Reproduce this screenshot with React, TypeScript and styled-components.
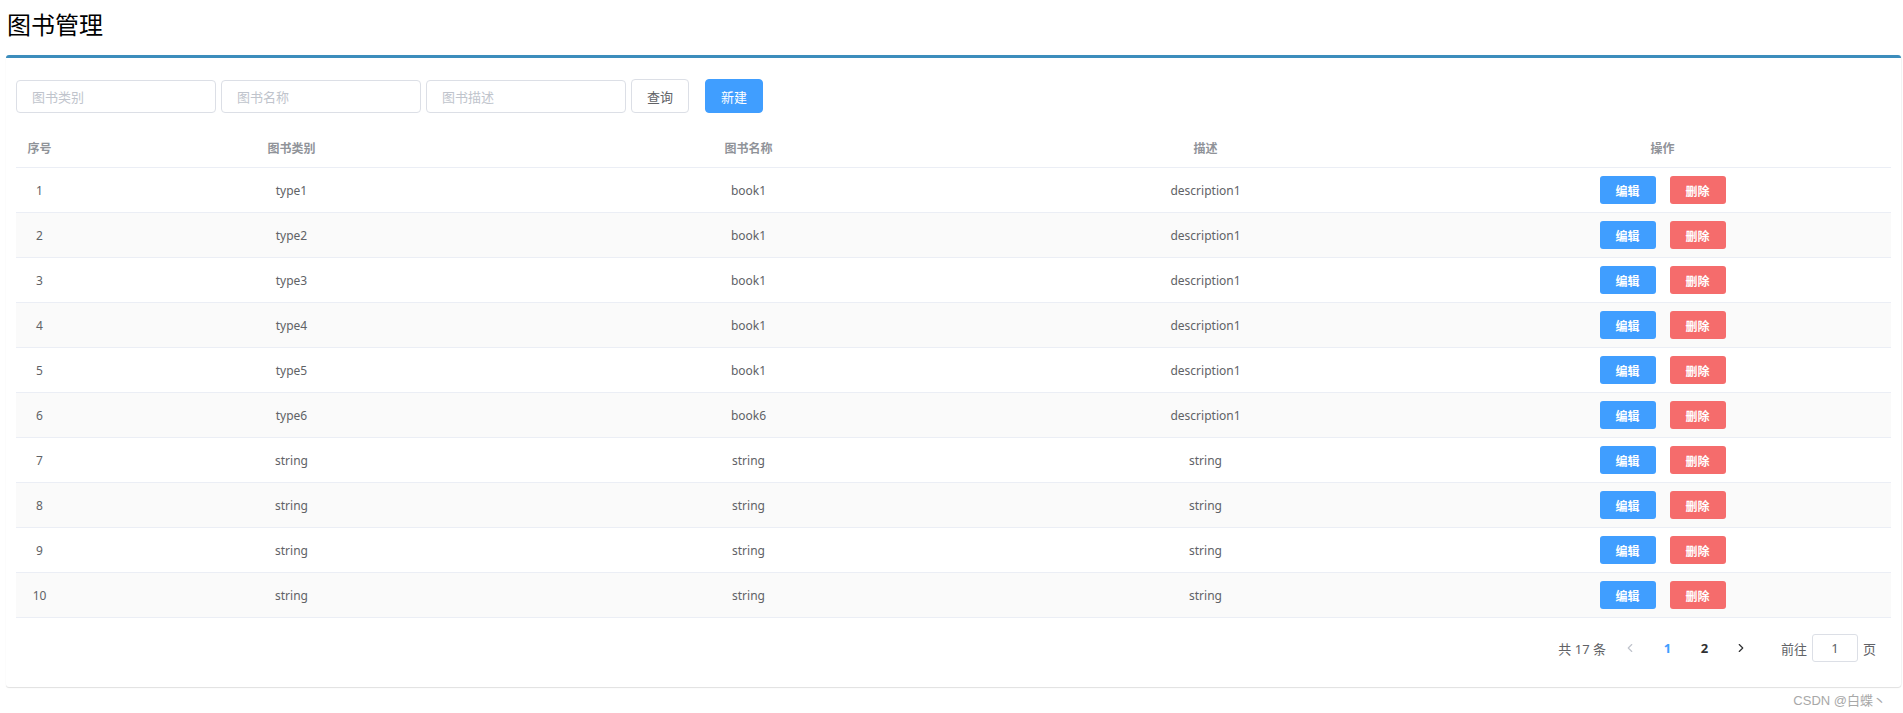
import React from 'react';
import styled, { createGlobalStyle } from 'styled-components';
import { ChevronLeft, ChevronRight } from 'lucide-react';

const GlobalStyle = createGlobalStyle`
  html, body {
    margin: 0;
    padding: 0;
    background: #fff;
  }
  body {
    font-family: "Noto Sans", "Noto Sans CJK SC", sans-serif;
    color: #606266;
  }
  * {
    box-sizing: border-box;
  }
`;

const Page = styled.div`
  padding: 11px 2px 0 6px;
`;

const Title = styled.h1`
  margin: 0 0 18px 1px;
  font-size: 24px;
  line-height: 26px;
  font-weight: 400;
  color: #000;
  font-family: "Noto Sans CJK SC", sans-serif;
`;

const Card = styled.div`
  background: #fff;
  border-top: 3px solid #3c8dbc;
  border-radius: 3px;
  box-shadow: 0 1px 1px rgba(0, 0, 0, 0.12), 1px 0 1px rgba(0, 0, 0, 0.04);
  padding: 21px 10px 25px;
`;

const SearchBar = styled.div`
  display: flex;
  align-items: center;
  gap: 5px;
`;

const SearchInput = styled.input`
  width: 200px;
  height: 33px;
  border: 1px solid #dcdfe6;
  border-radius: 4px;
  padding: 0 15px;
  font-size: 13px;
  font-family: "Noto Sans CJK SC", sans-serif;
  color: #606266;
  outline: none;
  &::placeholder {
    color: #c0c4cc;
  }
`;

const Button = styled.button<{ $primary?: boolean }>`
  height: 34px;
  padding: 0 15px;
  border-radius: 4px;
  font-size: 13px;
  font-family: "Noto Sans CJK SC", sans-serif;
  cursor: pointer;
  border: 1px solid ${p => (p.$primary ? '#409eff' : '#dcdfe6')};
  background: ${p => (p.$primary ? '#409eff' : '#fff')};
  color: ${p => (p.$primary ? '#fff' : '#606266')};
  margin-left: ${p => (p.$primary ? '11px' : '0')};
`;

const Table = styled.div`
  margin-top: 15px;
  font-size: 12px;
`;

const HeaderRow = styled.div`
  display: grid;
  grid-template-columns: 47px repeat(4, 1fr);
  height: 40px;
  align-items: center;
  border-bottom: 1px solid #ebeef5;
  color: #909399;
  font-weight: 700;
  font-family: "Noto Sans CJK SC", sans-serif;
`;

const Row = styled.div<{ $striped: boolean }>`
  display: grid;
  grid-template-columns: 47px repeat(4, 1fr);
  height: 45px;
  align-items: center;
  border-bottom: 1px solid #ebeef5;
  background: ${p => (p.$striped ? '#fafafa' : '#fff')};
`;

const Cell = styled.div`
  text-align: center;
  display: flex;
  justify-content: center;
  align-items: center;
  gap: 14px;
`;

const ActionButton = styled.button<{ $danger?: boolean }>`
  width: 56px;
  height: 28px;
  border: none;
  border-radius: 3px;
  background: ${p => (p.$danger ? '#f56c6c' : '#409eff')};
  color: #fff;
  font-size: 12px;
  font-weight: 700;
  font-family: "Noto Sans CJK SC", sans-serif;
  cursor: pointer;
  padding: 0;
`;

const Pagination = styled.div`
  display: flex;
  justify-content: flex-end;
  align-items: center;
  margin-top: 16px;
  padding-right: 15px;
  font-size: 13px;
  color: #606266;
  font-family: "Noto Sans", "Noto Sans CJK SC", sans-serif;
`;

const Total = styled.span`
  margin-right: 6px;
`;

const Arrow = styled.span<{ $disabled?: boolean }>`
  width: 37px;
  display: flex;
  justify-content: center;
  color: ${p => (p.$disabled ? '#c0c4cc' : '#303133')};
`;

const PageNum = styled.span<{ $active?: boolean }>`
  width: 37px;
  text-align: center;
  font-weight: 700;
  color: ${p => (p.$active ? '#409eff' : '#303133')};
`;

const Jumper = styled.span`
  display: flex;
  align-items: center;
  gap: 5px;
  margin-left: 21px;
`;

const JumpInput = styled.input`
  width: 46px;
  height: 28px;
  border: 1px solid #dcdfe6;
  border-radius: 3px;
  text-align: center;
  font-size: 13px;
  color: #606266;
  outline: none;
  font-family: "Noto Sans", sans-serif;
`;

const Watermark = styled.div`
  text-align: right;
  padding: 3px 15px 0 0;
  font-size: 13px;
  color: #a8a8a8;
  font-family: "Liberation Sans", "Noto Sans CJK SC", sans-serif;
`;

const books = [
  { type: 'type1', name: 'book1', desc: 'description1' },
  { type: 'type2', name: 'book1', desc: 'description1' },
  { type: 'type3', name: 'book1', desc: 'description1' },
  { type: 'type4', name: 'book1', desc: 'description1' },
  { type: 'type5', name: 'book1', desc: 'description1' },
  { type: 'type6', name: 'book6', desc: 'description1' },
  { type: 'string', name: 'string', desc: 'string' },
  { type: 'string', name: 'string', desc: 'string' },
  { type: 'string', name: 'string', desc: 'string' },
  { type: 'string', name: 'string', desc: 'string' },
];

const App: React.FC = () => {
  return (
    <Page>
      <GlobalStyle />
      <Title>图书管理</Title>
      <Card>
        <SearchBar>
          <SearchInput placeholder="图书类别" />
          <SearchInput placeholder="图书名称" />
          <SearchInput placeholder="图书描述" />
          <Button>查询</Button>
          <Button $primary>新建</Button>
        </SearchBar>

        <Table>
          <HeaderRow>
            <Cell>序号</Cell>
            <Cell>图书类别</Cell>
            <Cell>图书名称</Cell>
            <Cell>描述</Cell>
            <Cell>操作</Cell>
          </HeaderRow>
          {books.map((book, index) => (
            <Row key={index} $striped={index % 2 === 1}>
              <Cell>{index + 1}</Cell>
              <Cell>{book.type}</Cell>
              <Cell>{book.name}</Cell>
              <Cell>{book.desc}</Cell>
              <Cell>
                <ActionButton>编辑</ActionButton>
                <ActionButton $danger>删除</ActionButton>
              </Cell>
            </Row>
          ))}
        </Table>

        <Pagination>
          <Total>共 17 条</Total>
          <Arrow $disabled><ChevronLeft size={14} /></Arrow>
          <PageNum $active>1</PageNum>
          <PageNum>2</PageNum>
          <Arrow><ChevronRight size={14} /></Arrow>
          <Jumper>
            前往
            <JumpInput defaultValue="1" />
            页
          </Jumper>
        </Pagination>
      </Card>
      <Watermark>CSDN @白蝶丶</Watermark>
    </Page>
  );
};

export default App;
